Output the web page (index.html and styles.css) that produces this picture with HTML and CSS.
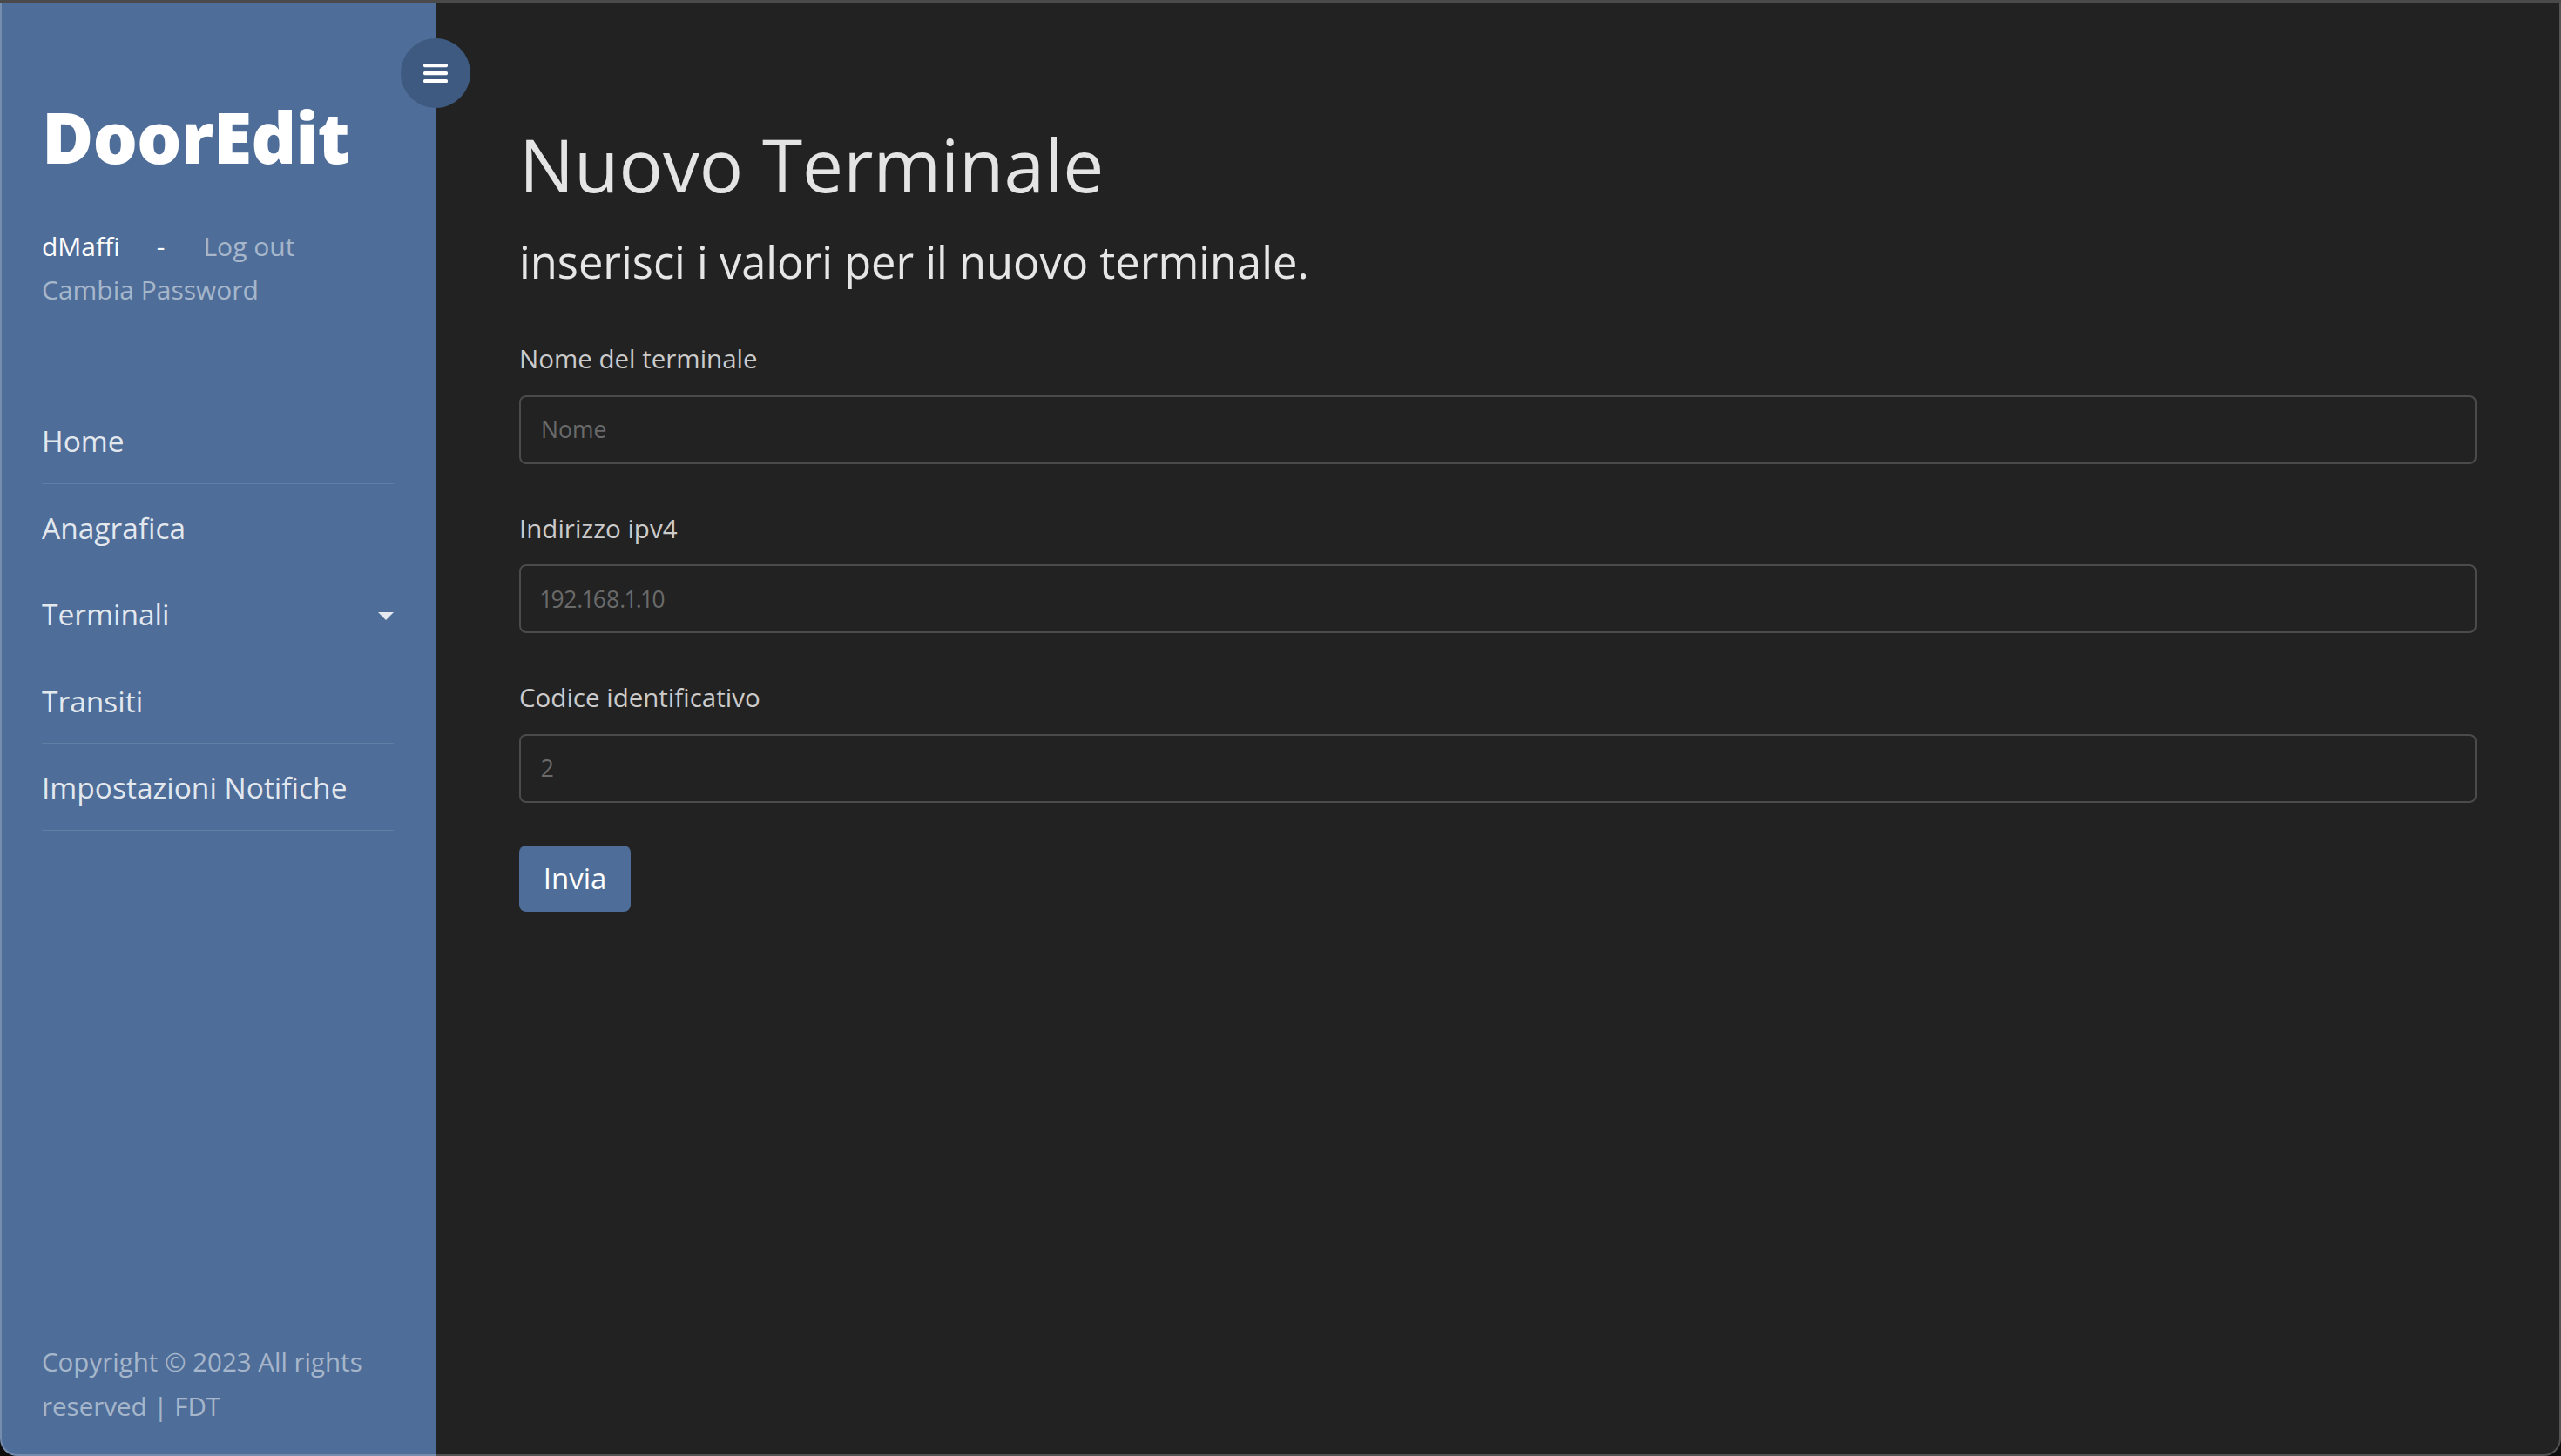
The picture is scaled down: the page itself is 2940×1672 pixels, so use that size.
FILE: index.html
```html
<!DOCTYPE html>
<html lang="it">
<head>
<meta charset="utf-8">
<title>DoorEdit - Nuovo Terminale</title>
<link rel="stylesheet" href="styles.css">
</head>
<body>
<div class="window">
  <aside class="sidebar">
    <button class="toggle" type="button" aria-label="Menu">
      <svg width="28" height="22" viewBox="0 0 28 22"><rect x="0" y="0" width="28" height="4.2" rx="1.6" fill="#fff"/><rect x="0" y="9" width="28" height="4.2" rx="1.6" fill="#fff"/><rect x="0" y="18" width="28" height="4.2" rx="1.6" fill="#fff"/></svg>
    </button>
    <h1 class="brand">DoorEdit</h1>
    <div class="user">
      <div class="user-line"><span class="user-name">dMaffi</span><span class="user-sep">-</span><a class="user-link" href="#">Log out</a></div>
      <div class="user-line"><a class="user-link" href="#">Cambia Password</a></div>
    </div>
    <nav class="nav">
      <a class="nav-item" href="#">Home</a>
      <a class="nav-item" href="#">Anagrafica</a>
      <a class="nav-item" href="#"><span>Terminali</span><span class="caret"></span></a>
      <a class="nav-item" href="#">Transiti</a>
      <a class="nav-item" href="#">Impostazioni Notifiche</a>
    </nav>
    <footer class="footer">Copyright © 2023 All rights reserved | FDT</footer>
  </aside>
  <main class="main">
    <h2 class="title">Nuovo Terminale</h2>
    <h3 class="subtitle">inserisci i valori per il nuovo terminale.</h3>
    <form class="form">
      <div class="group">
        <label class="label" for="nome">Nome del terminale</label>
        <input class="input" id="nome" type="text" placeholder="Nome">
      </div>
      <div class="group">
        <label class="label" for="ip">Indirizzo ipv4</label>
        <input class="input" id="ip" type="text" placeholder="192.168.1.10">
      </div>
      <div class="group">
        <label class="label" for="codice">Codice identificativo</label>
        <input class="input" id="codice" type="text" placeholder="2">
      </div>
      <button class="submit" type="submit">Invia</button>
    </form>
  </main>
</div>
</body>
</html>
```
FILE: styles.css
```css
* { box-sizing: border-box; }
html, body { margin: 0; padding: 0; height: 100%; }
body {
  background: #0d0d0d;
  font-family: "Open Sans", "Noto Sans", sans-serif;
  overflow: hidden;
}
.window {
  display: flex;
  height: 100vh;
  border-top: 3px solid #4a4a4a;
}
.sidebar {
  position: relative;
  z-index: 2;
  flex: 0 0 500px;
  display: flex;
  flex-direction: column;
  background: #4e6d98;
  border-left: 2px solid rgba(255,255,255,0.22);
  border-bottom: 2px solid rgba(255,255,255,0.22);
  border-bottom-left-radius: 20px;
  padding: 104px 48px 30px 46px;
}
.toggle {
  position: absolute;
  left: 458px;
  top: 41px;
  width: 80px;
  height: 80px;
  border: 0;
  border-radius: 50%;
  background: #3f5a80;
  display: flex;
  align-items: center;
  justify-content: center;
  padding: 0;
  cursor: pointer;
}
.toggle svg { display: block; }
.brand {
  margin: 0;
  font-size: 81px;
  line-height: 100px;
  font-weight: 800;
  color: #ffffff;
  letter-spacing: -1px;
}
.user {
  margin-top: 51px;
  font-size: 30px;
  line-height: 50px;
}
.user-line { white-space: nowrap; }
.user-name { color: #ffffff; font-weight: 500; }
.user-sep { color: #ffffff; margin: 0 44px 0 42px; font-weight: 500; }
.user-link { color: rgba(255,255,255,0.5); text-decoration: none; }
.nav {
  margin-top: 98px;
  display: flex;
  flex-direction: column;
}
.nav-item {
  display: flex;
  align-items: center;
  justify-content: space-between;
  padding: 25px 0 23.5px;
  font-size: 33.5px;
  line-height: 50px;
  color: rgba(255,255,255,0.86);
  text-decoration: none;
  border-bottom: 1px solid rgba(255,255,255,0.12);
}
.caret {
  width: 0;
  height: 0;
  border-top: 9px solid rgba(255,255,255,0.86);
  border-left: 9.5px solid transparent;
  border-right: 9.5px solid transparent;
  margin-top: 4px;
}
.footer {
  margin-top: auto;
  font-size: 29.5px;
  line-height: 51px;
  color: rgba(255,255,255,0.5);
}
.main {
  flex: 1 1 auto;
  background: #222222;
  border-right: 2px solid rgba(255,255,255,0.22);
  border-bottom: 2px solid rgba(255,255,255,0.22);
  border-bottom-right-radius: 20px;
  padding: 136px 95px 0 96px;
}
.title {
  margin: 0;
  font-size: 83.8px;
  line-height: 100px;
  font-weight: 400;
  color: #e4e4e4;
}
.subtitle {
  margin: 32px 0 0;
  font-size: 50.6px;
  line-height: 60px;
  font-weight: 400;
  color: #e6e6e6;
}
.form { margin-top: 59px; }
.group {
  display: flex;
  flex-direction: column;
  margin-bottom: 52px;
}
.label {
  font-size: 29.5px;
  line-height: 44px;
  color: #cbcbcb;
  margin-bottom: 19.5px;
}
.input {
  height: 79px;
  width: 100%;
  background: #222222;
  border: 2px solid #4b4b4b;
  border-radius: 8px;
  padding: 0 23px;
  font-family: "Open Sans", "Noto Sans", sans-serif;
  font-size: 26.5px;
  color: #dddddd;
  font-variant-numeric: proportional-nums;
  outline: none;
}
.input::placeholder { color: #6a6a6a; }
.submit {
  display: block;
  margin-top: -3px;
  height: 76px;
  width: 128px;
  padding: 0;
  border: 0;
  border-radius: 8px;
  background: #4e6d98;
  color: #ffffff;
  font-family: "Open Sans", "Noto Sans", sans-serif;
  font-size: 33px;
  cursor: pointer;
}
```
